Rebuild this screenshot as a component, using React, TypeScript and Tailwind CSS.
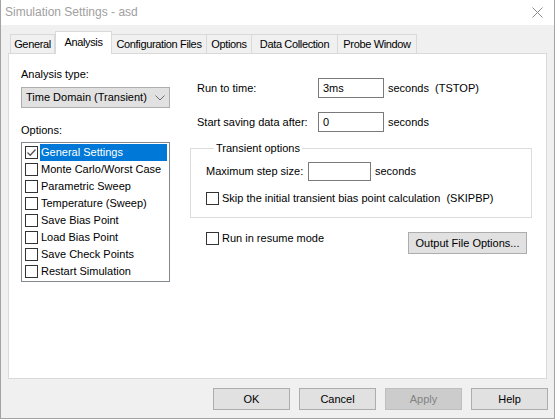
import React from 'react';

const tabs = [
  { label: 'General', w: 'w-[45px]' },
  { label: 'Analysis', w: 'w-[57px]', active: true },
  { label: 'Configuration Files', w: 'w-[96px]' },
  { label: 'Options', w: 'w-[46px]' },
  { label: 'Data Collection', w: 'w-[87px]' },
  { label: 'Probe Window', w: 'w-[80px]' },
];

const options = [
  'General Settings',
  'Monte Carlo/Worst Case',
  'Parametric Sweep',
  'Temperature (Sweep)',
  'Save Bias Point',
  'Load Bias Point',
  'Save Check Points',
  'Restart Simulation',
];

const CheckBox = ({ checked = false }: { checked?: boolean }) => (
  <span className="flex h-[13px] w-[13px] shrink-0 items-center justify-center border border-[#333] bg-white">
    {checked && (
      <svg width="11" height="11" viewBox="0 0 11 11">
        <path d="M1.5 5.5 L4.2 8.2 L9.5 2.5" fill="none" stroke="#555" strokeWidth="1.3" />
      </svg>
    )}
  </span>
);

const Field = ({ value = '', w = 'w-[66px]', h = 'h-[20px]' }: { value?: string; w?: string; h?: string }) => (
  <div className={`${w} ${h} flex items-center border border-[#7a7a7a] bg-white pl-[4px]`}>{value}</div>
);

const Button = ({ label, disabled = false }: { label: string; disabled?: boolean }) => (
  <div
    className={`flex h-[22px] w-[77px] items-center justify-center border ${
      disabled ? 'border-[#bfbfbf] bg-[#cccccc] text-[#838383]' : 'border-[#adadad] bg-[#e1e1e1] text-black'
    }`}
  >
    {label}
  </div>
);

export default function App() {
  return (
    <div className="h-[420px] w-[560px] bg-white font-['Liberation_Sans',Arial,sans-serif] text-[11px] leading-[13px] text-black">
      <div className="flex h-[419px] w-[555px] flex-col border-x border-b border-[#a3a3a3]">
        {/* title bar */}
        <div className="flex h-[25px] items-center justify-between bg-white pl-[4px] pr-[11px]">
          <span className="text-[12px] text-[#a0a0a0]">Simulation Settings - asd</span>
          <svg width="11" height="11" viewBox="0 0 11 11">
            <path d="M0.5 0.5 L10.5 10.5 M10.5 0.5 L0.5 10.5" stroke="#8a8a8a" strokeWidth="1" />
          </svg>
        </div>

        <div className="flex flex-1 flex-col bg-[#f0f0f0] px-[7px] pb-[8px]">
          {/* tab strip */}
          <div className="flex h-[28px] items-end pl-[2px] pt-[6px] tracking-[-0.35px]">
            {tabs.map(t =>
              t.active ? (
                <div
                  key={t.label}
                  className={`${t.w} relative z-10 -mb-px flex h-[23px] items-start justify-center border-x border-t border-[#d9d9d9] bg-white pt-[4px]`}
                >
                  {t.label}
                </div>
              ) : (
                <div
                  key={t.label}
                  className={`${t.w} -ml-px flex h-[19px] items-start justify-center whitespace-nowrap border-x border-t border-[#d9d9d9] bg-[#f0f0f0] pt-[3px] first:ml-0`}
                >
                  {t.label}
                </div>
              )
            )}
          </div>

          {/* tab page */}
          <div className="flex h-[326px] border border-[#d9d9d9] bg-white pl-[12px] pt-[14px]">
            <div className="flex w-[149px] flex-col">
              <span>Analysis type:</span>
              <div className="mt-[6px] flex h-[21px] items-center justify-between border border-[#adadad] bg-[#e1e1e1] pl-[4px] pr-[4px]">
                <span>Time Domain (Transient)</span>
                <svg width="10" height="6" viewBox="0 0 10 6">
                  <path d="M0.5 0.5 L5 5 L9.5 0.5" fill="none" stroke="#6d6d6d" strokeWidth="1" />
                </svg>
              </div>
              <span className="mt-[16px]">Options:</span>
              <div className="mt-[5px] flex h-[140px] flex-col border border-[#828790] bg-white pt-px">
                {options.map((o, i) => (
                  <div key={o} className="flex h-[17px] items-center pl-[3px] pr-[2px]">
                    <CheckBox checked={i === 0} />
                    <span
                      className={`ml-[2px] flex h-[17px] items-center pl-px ${
                        i === 0 ? 'flex-1 bg-[#0078d7] text-white' : ''
                      }`}
                    >
                      {o}
                    </span>
                  </div>
                ))}
              </div>
            </div>

            <div className="ml-[20px] mt-[10px] flex w-[342px] flex-col">
              <div className="flex items-center pl-[7px]">
                <span className="w-[121px]">Run to time:</span>
                <Field value="3ms" />
                <span className="ml-[4px] whitespace-pre">seconds  (TSTOP)</span>
              </div>
              <div className="mt-[14px] flex items-center pl-[7px]">
                <span className="w-[121px]">Start saving data after:</span>
                <Field value="0" />
                <span className="ml-[4px]">seconds</span>
              </div>

              <fieldset className="mt-[10px] border border-[#dcdcdc] pb-[12px] pl-[15px]">
                <legend className="ml-[8px] px-[2px]">Transient options</legend>
                <div className="mt-[7px] flex items-center">
                  <span className="w-[102px]">Maximum step size:</span>
                  <Field w="w-[63px]" h="h-[19px]" />
                  <span className="ml-[4px]">seconds</span>
                </div>
                <div className="mt-[11px] flex items-center">
                  <CheckBox />
                  <span className="ml-[3px] whitespace-pre">Skip the initial transient bias point calculation  (SKIPBP)</span>
                </div>
              </fieldset>

              <div className="mt-[14px] flex items-start justify-between pl-[16px] pr-[5px]">
                <div className="flex items-center">
                  <CheckBox />
                  <span className="ml-[3px]">Run in resume mode</span>
                </div>
                <div className="flex h-[22px] w-[119px] items-center justify-center border border-[#adadad] bg-[#e1e1e1]">
                  Output File Options...
                </div>
              </div>
            </div>
          </div>

          {/* dialog buttons */}
          <div className="-mr-px mt-[9px] flex justify-end gap-[9px]">
            <Button label="OK" />
            <Button label="Cancel" />
            <Button label="Apply" disabled />
            <Button label="Help" />
          </div>
        </div>
      </div>
    </div>
  );
}
